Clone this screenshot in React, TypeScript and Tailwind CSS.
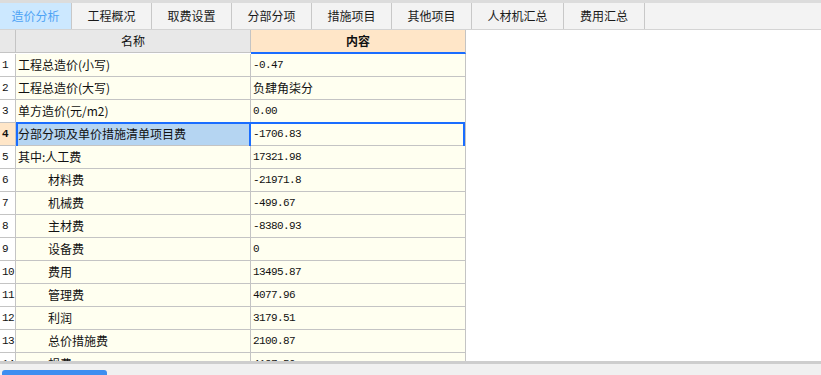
import React from "react";

const tabs = [
  { label: "造价分析", w: "w-[72px]", active: true },
  { label: "工程概况", w: "w-[80px]" },
  { label: "取费设置", w: "w-[80px]" },
  { label: "分部分项", w: "w-[80px]" },
  { label: "措施项目", w: "w-[80px]" },
  { label: "其他项目", w: "w-[80px]" },
  { label: "人材机汇总", w: "w-[92px]" },
  { label: "费用汇总", w: "w-[81px]" },
];

const rows: { name: string; value: string; indent?: boolean }[] = [
  { name: "工程总造价(小写)", value: "-0.47" },
  { name: "工程总造价(大写)", value: "负肆角柒分" },
  { name: "单方造价(元/m2)", value: "0.00" },
  { name: "分部分项及单价措施清单项目费", value: "-1706.83" },
  { name: "其中:人工费", value: "17321.98" },
  { name: "材料费", value: "-21971.8", indent: true },
  { name: "机械费", value: "-499.67", indent: true },
  { name: "主材费", value: "-8380.93", indent: true },
  { name: "设备费", value: "0", indent: true },
  { name: "费用", value: "13495.87", indent: true },
  { name: "管理费", value: "4077.96", indent: true },
  { name: "利润", value: "3179.51", indent: true },
  { name: "总价措施费", value: "2100.87", indent: true },
  { name: "规费", value: "4187.50", indent: true },
];

const cjk = "font-['Noto_Sans_CJK_SC','Noto_Sans',sans-serif]";
const mono = "font-['Liberation_Mono','Noto_Sans_CJK_SC',monospace] text-[11px] tracking-[-0.6px]";

export default function App() {
  return (
    <div className={`w-[821px] h-[375px] bg-white flex flex-col overflow-hidden text-[#111] ${cjk}`}>
      {/* tab strip */}
      <div className="h-[30px] shrink-0 flex border-t-[3px] border-b border-t-[#dcdcdc] border-b-[#d4d4d4] bg-[#f3f3f3]">
        {tabs.map((t) => (
          <div
            key={t.label}
            className={`${t.w} h-full flex items-center justify-center border-r border-[#c8c8c8] text-[12px] leading-none ${
              t.active ? "bg-[#cce8ff] text-[#4ea3f5]" : "text-[#1a1a1a]"
            }`}
          >
            {t.label}
          </div>
        ))}
      </div>

      {/* grid */}
      <div className="flex-1 overflow-hidden bg-white">
        <div className="w-[466px] flex flex-col">
          {/* header */}
          <div className="flex h-[24px]">
            <div className="w-[16px] h-[23px] bg-[#e8e8e8] border-r border-b border-[#c4c4c4]" />
            <div className="w-[235px] h-[23px] bg-[#e8e8e8] border-r border-b border-[#c4c4c4] flex items-center justify-center text-[12px]">
              名称
            </div>
            <div className="w-[215px] h-[24px] bg-[#ffe6c8] border-r border-[#c4c4c4] border-b-2 border-b-[#1a6dff] flex items-center justify-center text-[12px] font-bold">
              内容
            </div>
          </div>
          {rows.map((r, i) => {
            const sel = i === 3;
            return (
              <div key={i} className="relative flex h-[23px] shrink-0">
                <div
                  className={`w-[16px] h-full border-r border-b border-[#c4c4c4] flex items-center pl-[2px] ${mono} ${
                    sel ? "bg-[#ffe6c8] font-bold" : "bg-white"
                  }`}
                >
                  {i + 1}
                </div>
                <div
                  className={`w-[235px] h-full border-r border-b border-[#c4c4c4] flex items-center text-[12px] leading-none whitespace-nowrap ${
                    r.indent ? "pl-[32px]" : "pl-[2px]"
                  } ${sel ? "bg-[#b5d5f2]" : "bg-[#fffff0]"}`}
                >
                  {r.name}
                </div>
                <div
                  className={`w-[215px] h-full border-r border-b border-[#c4c4c4] bg-[#fffff0] flex items-center pl-[2px] whitespace-nowrap ${
                    /[0-9]/.test(r.value) ? mono : "text-[12px]"
                  }`}
                >
                  {r.value}
                </div>
                {sel && (
                  <>
                    <div className="absolute left-[16px] top-[-1px] w-[449px] h-[26px] border-2 border-[#1a6dff] pointer-events-none" />
                    <div className="absolute left-[249px] top-[-1px] w-[2px] h-[26px] bg-[#1a6dff] pointer-events-none" />
                  </>
                )}
              </div>
            );
          })}
        </div>
      </div>

      {/* bottom bar */}
      <div className="h-[14px] shrink-0 border-t-[3px] border-[#cdcdcd] bg-[#f0f0f0] flex items-end pl-[2px]">
        <div className="w-[105px] h-[5px] rounded-t-[3px] bg-[#3d8ef0]" />
      </div>
    </div>
  );
}
